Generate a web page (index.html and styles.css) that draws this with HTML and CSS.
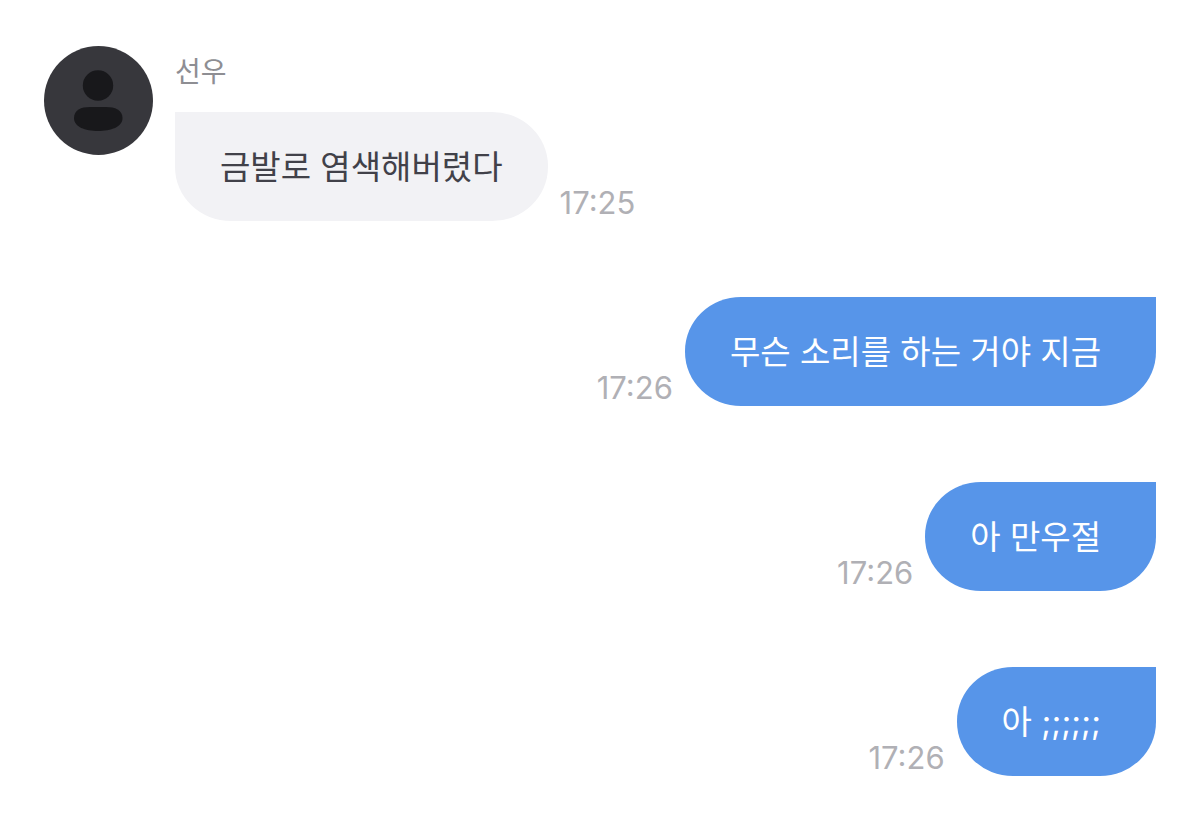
FILE: index.html
```html
<!DOCTYPE html>
<html lang="ko">
<head>
  <meta charset="UTF-8">
  <title>선우</title>
  <meta name="viewport" content="width=device-width, initial-scale=1.0">
  <link rel="stylesheet" href="styles.css">
</head>
<body>

  <main class="chat">
    <div class="message received">
      <svg class="avatar" viewBox="0 0 109 109" aria-hidden="true">
        <circle cx="54.500" cy="54.500" r="54.500" fill="#37373c"/>
        <circle cx="54" cy="39.500" r="15.200" fill="#18181b"/>
        <path d="M30 72C30 64 37 61 46 61H62C71 61 78.500 64 78.500 72C78.500 81 67 85 54 85S30 81 30 72Z" fill="#18181b"/>
      </svg>
      <div class="content">
        <div class="name">선우</div>
        <div class="line">
          <p class="bubble">금발로 염색해버렸다</p>
          <time class="time">17:25</time>
        </div>
      </div>
    </div>

    <div class="message sent">
      <time class="time">17:26</time>
      <p class="bubble">무슨 소리를 하는 거야 지금</p>
    </div>

    <div class="message sent">
      <time class="time">17:26</time>
      <p class="bubble">아 만우절</p>
    </div>

    <div class="message sent">
      <time class="time">17:26</time>
      <p class="bubble">아 ;;;;;;</p>
    </div>
  </main>

</body>
</html>
```
FILE: styles.css
```css
body {
  background: #fff;
  font-family: Inter, "Noto Sans CJK KR", sans-serif;
  margin: 0;
}

.chat {
  display: flex;
  flex-direction: column;
  gap: 76px;
  padding: 46px 44px;
}

.message {
  display: flex;
  align-items: flex-end;
  gap: 12px;
}

.received {
  align-items: flex-start;
  gap: 22px;
}

.sent {
  justify-content: flex-end;
}

.avatar {
  width: 109px;
  height: 109px;
  flex-shrink: 0;
}

.name {
  color: #8e8e93;
  font-size: 28px;
  line-height: 52px;
  margin-bottom: 14px;
}

.line {
  display: flex;
  align-items: flex-end;
  gap: 12px;
}

.bubble {
  margin: 0;
  padding: 2px 45px 0;
  font-size: 33px;
  line-height: 107px;
}

.received .bubble {
  background: #f2f2f5;
  color: #414149;
  border-radius: 0 56px 56px 56px / 0 54px 54px 54px;
}

.sent .bubble {
  background: #5795e9;
  color: #fff;
  padding-right: 55px;
  border-radius: 56px 0 56px 56px / 54px 0 54px 54px;
}

.time {
  color: #b0b0b5;
  font-size: 31px;
  line-height: 36px;
}
```
